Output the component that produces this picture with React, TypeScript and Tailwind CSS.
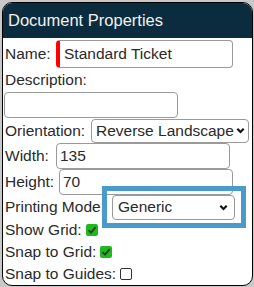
import React from "react";

const font = { fontFamily: '"Liberation Sans", Arial, sans-serif' };

function Check({ checked }: { checked: boolean }) {
  if (!checked)
    return <span className="inline-block w-[12px] h-[12px] border border-[#333] rounded-[2px] bg-white" />;
  return (
    <span className="inline-flex items-center justify-center w-[12px] h-[12px] rounded-[2px] bg-[#1fb81f]">
      <svg width="10" height="10" viewBox="0 0 10 10">
        <path d="M1.5 5.2 L4 7.6 L8.6 2.2" stroke="#2b3a2b" strokeWidth="1.8" fill="none" />
      </svg>
    </span>
  );
}

function Chevron() {
  return (
    <svg width="9" height="7" viewBox="0 0 9 7" className="shrink-0">
      <path d="M1.3 1.8 L4.5 5 L7.7 1.8" stroke="#111" strokeWidth="2.2" fill="none" />
    </svg>
  );
}

export default function App() {
  return (
    <div className="w-[254px] h-[287px] bg-[#c8c8c8] pt-[2px] pl-[2px] text-[15.5px] text-[#2a2a2a]" style={font}>
      <div className="relative w-[251px] h-[284px] border border-black rounded-[10px] overflow-hidden bg-white">
        <div className="h-[35px] bg-[#0b2b3e] text-[#f2f2f2] text-[16.5px] pl-[5px] flex items-center">
          Document Properties
        </div>
        <div className="pl-[2px]">
          <div className="h-[31px] flex items-center">
            <span className="w-[51px]">Name:</span>
            <div className="w-[177px] h-[28px] border border-[#9a9a9a] border-l-[4px] border-l-[#ff0000] rounded-[4px] flex items-center pl-[4px]">
              Standard Ticket
            </div>
          </div>
          <div className="h-[22px] flex items-center">Description:</div>
          <div className="h-[27px] flex items-center">
            <div className="-ml-[1px] w-[174px] h-[26px] border border-[#9a9a9a] rounded-[4px]" />
          </div>
          <div className="h-[25px] flex items-center">
            <span className="w-[86px]">Orientation:</span>
            <div className="w-[158px] h-[24px] border border-[#9a9a9a] rounded-[4px] flex items-center justify-between pl-[4px] pr-[3px]">
              <span>Reverse Landscape</span>
              <Chevron />
            </div>
          </div>
          <div className="h-[26px] flex items-center">
            <span className="w-[51px]">Width:</span>
            <div className="w-[174px] h-[26px] border border-[#9a9a9a] rounded-[4px] flex items-center pl-[3px]">135</div>
          </div>
          <div className="h-[26px] flex items-center">
            <span className="w-[54px]">Height:</span>
            <div className="w-[174px] h-[26px] border border-[#9a9a9a] rounded-[4px] flex items-center pl-[3px]">70</div>
          </div>
          <div className="h-[24px] flex items-center whitespace-nowrap">
            <span className="w-[107px] overflow-hidden">Printing Mode:</span>
            <div className="w-[123px] h-[25px] border border-[#9a9a9a] rounded-[4px] flex items-center justify-between pl-[5px] pr-[6px]">
              <span>Generic</span>
              <Chevron />
            </div>
          </div>
          <div className="h-[22px] flex items-center gap-[4px]">
            <span>Show Grid:</span>
            <Check checked />
          </div>
          <div className="h-[22px] flex items-center gap-[4px]">
            <span>Snap to Grid:</span>
            <Check checked />
          </div>
          <div className="h-[22px] flex items-center gap-[4px]">
            <span>Snap to Guides:</span>
            <Check checked={false} />
          </div>
        </div>
        <div className="absolute left-[99px] top-[183px] w-[144px] h-[42px] border-[5px] border-[#4a9ad0] pointer-events-none" />
      </div>
    </div>
  );
}
